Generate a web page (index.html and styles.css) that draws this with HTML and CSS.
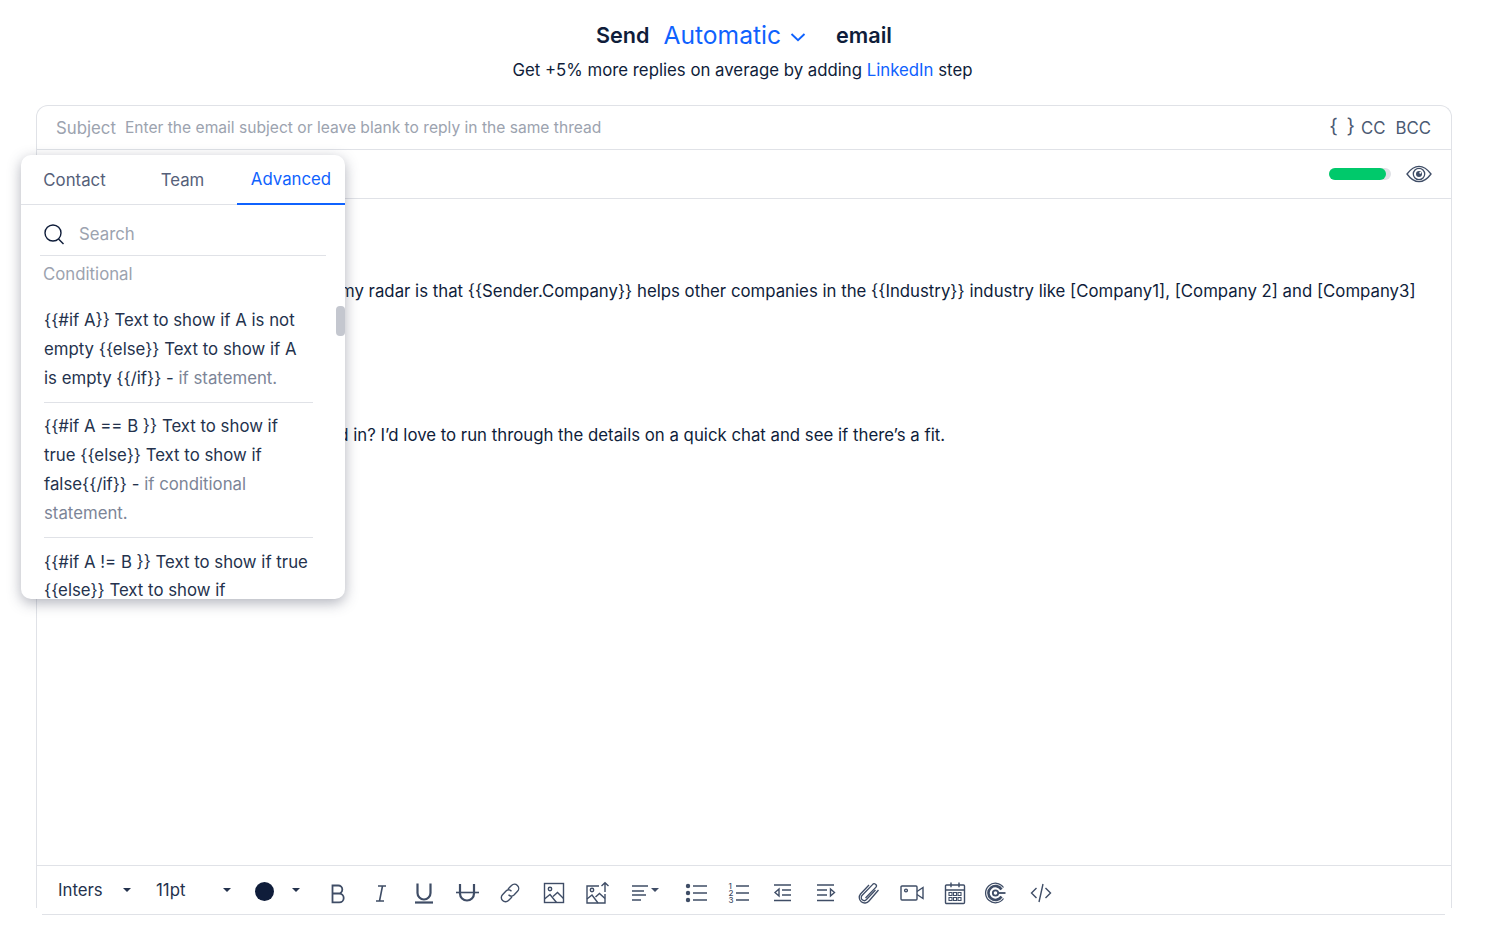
FILE: index.html
```html
<!DOCTYPE html>
<html lang="en">
<head>
<meta charset="utf-8">
<title>Send email</title>
<link rel="stylesheet" href="styles.css">
</head>
<body>
<header class="head">
  <div class="head-title">
    <span>Send</span>
    <span class="mode">Automatic</span>
    <svg class="chev" viewBox="0 0 16 10" width="16" height="10"><path d="M1.500 2 8 8.200 14.500 2" fill="none" stroke="#0f62fe" stroke-width="1.900"/></svg>
    <span class="email">email</span>
  </div>
  <div class="head-sub">Get +5% more replies on average by adding <span class="blue">LinkedIn</span> step</div>
</header>

<main class="editor">
  <div class="subject">
    <span class="subject-label">Subject</span>
    <span class="subject-ph">Enter the email subject or leave blank to reply in the same thread</span>
    <span class="subject-right"><span class="braces">{ }</span><span>CC</span><span>BCC</span></span>
  </div>
  <div class="status">
    <div class="meter"><div class="meter-fill"></div></div>
    <svg width="26" height="18" viewBox="0 0 26 18" fill="none" stroke="#3f4d66" stroke-width="1.300"><path d="M1 9C5 3.600 8.800 1.300 13 1.300S21 3.600 25 9c-4 5.400-7.800 7.700-12 7.700S5 14.400 1 9Z"/><circle cx="13" cy="9" r="5.700"/><circle cx="13" cy="9" r="3" fill="#3f4d66" stroke="none"/><circle cx="14.300" cy="7.800" r="1" fill="#fff" stroke="none"/></svg>
  </div>
  <div class="body">
    <p class="line">This reason why you popped up on my radar is that {{Sender.Company}} helps other companies in the {{Industry}} industry like [Company1], [Company 2] and [Company3]</p>
    <p class="line">Is that something you’d be interested in? I’d love to run through the details on a quick chat and see if there’s a fit.</p>
  </div>
  <div class="toolbar">
    <div class="toolbar-inner">
      <span class="select sel-font">Inters</span><span class="caret c1"></span>
      <span class="select sel-size">11pt</span><span class="caret c2"></span>
      <span class="dot"></span><span class="caret c3"></span>
      <div class="icons">
        <svg class="ic" viewBox="0 0 22 22"><path d="M5.500 3.500h5.800a4 4 0 0 1 0 8H5.500Zm0 8h6.800a4.300 4.300 0 0 1 0 8.800H5.500Z" stroke-width="1.800"/></svg>
        <svg class="ic" viewBox="0 0 22 22"><path d="M8 4h8M6 19h8M12.500 4l-3 15" stroke-width="1.600"/></svg>
        <svg class="ic" viewBox="0 0 22 22"><path d="M4.500 1.500V11a6.500 6.500 0 0 0 13 0V1.500" stroke-width="2.200"/><path d="M2 20.500h18" stroke-width="2.200"/></svg>
        <svg class="ic" viewBox="0 0 22 22"><path d="M4 2v9.500a7 7 0 0 0 14 0V2" stroke-width="2.200"/><path d="M0 10.500h23" stroke-width="1.600"/></svg>
        <svg class="ic" viewBox="0 0 22 22"><path d="M9 7l3.500-3.500a4 4 0 0 1 6 5.800L15 13a4 4 0 0 1-5.500-.2M13 15l-3.500 3.500a4 4 0 0 1-6-5.800L7 9a4 4 0 0 1 5.500.2" stroke-width="1.400"/></svg>
        <svg class="ic shift-r" viewBox="0 0 22 22"><rect x="1.500" y="1.500" width="19" height="19"/><circle cx="7" cy="7" r="1.700"/><path d="M1.500 17l5.500-4.500 6.500 8M10 14.500l4.500-4 6 6"/></svg>
        <svg class="ic" viewBox="0 0 22 22"><path d="M13 4H1v17h18v-9"/><circle cx="6" cy="8" r="1.700"/><path d="M1 17l5-4 6 8M9.500 15l4-3.500 5.500 5M19 10V1M15.500 4 19 .8 22.500 4"/></svg>
        <svg class="ic ic-wide" viewBox="0 0 35 22"><path d="M3 4h16M3 9h12M3 13h14M3 18h9"/><path d="M22 6h8l-4 4Z" fill="#3f4d66" stroke="none"/></svg>
        <svg class="ic" viewBox="0 0 22 22"><circle cx="3" cy="4" r="2.200" class="fill"/><circle cx="3" cy="11" r="2.200" class="fill"/><circle cx="3" cy="18" r="2.200" class="fill"/><path d="M8 4h14M8 11h14M8 18h14"/></svg>
        <svg class="ic" viewBox="0 0 22 22"><path d="M8 4h13M8 11h13M8 18h13"/><text x="0.500" y="7" class="num">1</text><text x="0.500" y="14" class="num">2</text><text x="0.500" y="21" class="num">3</text></svg>
        <svg class="ic" viewBox="0 0 22 22"><path d="M3 3h17M11 8h9M11 13h9M3 18.500h17"/><path d="M8 7v7l-4-3.500Z"/></svg>
        <svg class="ic shift-r" viewBox="0 0 22 22"><path d="M2 3h17M2 8h10M2 13h10M2 18.500h17"/><path d="M15.500 7v7l4-3.500Z"/></svg>
        <svg class="ic shift-l" viewBox="0 0 22 22"><path d="M17.500 8 8.500 17.500a3 3 0 0 1-4.500-4L14.500 2.700a2 2 0 0 1 3.500 2.500L7.500 16M20.500 8l-9.500 11a5.500 5.500 0 0 1-8.500-7L11 3" stroke-width="1.300"/></svg>
        <svg class="ic ic-video" viewBox="0 0 24 22"><rect x="1" y="4" width="16" height="14" rx="1"/><circle cx="6" cy="8.500" r="1.400"/><path d="M17 9.500 23 5.500v11l-6-4"/></svg>
        <svg class="ic" viewBox="0 0 22 22"><rect x="1.500" y="3" width="19" height="18.500" rx="1"/><path d="M1.500 8h19M7 .5v4.800M15 .5v4.800"/><path d="M5 10.500h3v3H5zM9.500 10.500h3v3h-3zM14 10.500h3v3h-3zM5 15.500h3v3H5zM9.500 15.500h3v3h-3zM14 15.500h3v3h-3z" stroke-width="1.100"/></svg>
        <svg class="ic ic-c" viewBox="0 0 22 22"><path d="M19.500 5.500A9.800 9.800 0 1 0 19.500 16.500" stroke-width="1.300"/><path d="M17.500 7.500A7 7 0 1 0 17.500 14.500" stroke-width="2.600"/><circle cx="11.500" cy="11" r="2.700" stroke-width="1.800"/><path d="M14 11h7.500" stroke-width="1.800"/></svg>
        <svg class="ic ic-code" viewBox="0 0 22 22"><path d="M6.500 6 1.500 11l5 5M15.500 6l5 5-5 5M13 2 9 20"/></svg>
      </div>
    </div>
  </div>

  <aside class="popup">
    <nav class="tabs">
      <span class="tab">Contact</span>
      <span class="tab">Team</span>
      <span class="tab tab-active">Advanced</span>
    </nav>
    <div class="search">
      <svg width="22" height="22" viewBox="0 0 22 22" fill="none" stroke="#0f1d3a" stroke-width="1.400"><circle cx="10" cy="10" r="8"/><path d="m15.500 16 5 5"/></svg>
      <span>Search</span>
    </div>
    <div class="section">Conditional</div>
    <div class="list">
      <div class="item">{{#if A}} Text to show if A is not empty {{else}} Text to show if A is empty {{/if}} - <span class="muted">if statement.</span></div>
      <div class="item">{{#if A == B }} Text to show if true {{else}} Text to show if false{{/if}} - <span class="muted">if conditional statement.</span></div>
      <div class="item">{{#if A != B }} Text to show if true {{else}} Text to show if</div>
    </div>
    <div class="thumb"></div>
  </aside>
</main>
</body>
</html>
```
FILE: styles.css
```css
* { box-sizing: border-box; }
html, body { margin: 0; height: 100%; }
body {
  background: #fff;
  color: #0f1d3a;
  font-family: Inter, "Liberation Sans", sans-serif;
  font-size: 16.8px;
  overflow: hidden;
}
.head { height: 105px; padding-top: 19px; display: flex; flex-direction: column; align-items: center; }
.head-title { display: flex; align-items: center; height: 32px; font-size: 21.6px; font-weight: 600; margin-left: 3px; }
.mode { color: #0f62fe; font-size: 24.6px; font-weight: 400; margin-left: 14px; }
.chev { margin: 4px 0 0 9px; }
.email { margin-left: 30px; }
.head-sub { margin-top: 4px; line-height: 30px; }
.blue { color: #0f62fe; }

.editor {
  position: relative;
  margin-left: 36px;
  width: 1416px;
  height: 803px;
  border: 1px solid #e0e2e7;
  border-bottom: 0;
  border-radius: 12px 12px 0 0;
  display: flex;
  flex-direction: column;
}
.subject {
  height: 44px;
  flex: none;
  border-bottom: 1px solid #e0e2e7;
  display: flex;
  align-items: center;
  padding: 0 20px 0 19px;
  color: #9ca3af;
}
.subject-label { margin-right: 9px; }
.subject-ph { font-size: 15.6px; }
.subject-right { margin-left: auto; display: flex; gap: 10px; color: #4b5a73; }
.braces { font-size: 20px; line-height: 24px; margin-top: -4px; margin-right: -4px; word-spacing: 3px; }
.status {
  height: 49px;
  flex: none;
  border-bottom: 1px solid #e0e2e7;
  display: flex;
  align-items: center;
  justify-content: flex-end;
  gap: 15px;
  padding-right: 19px;
}
.meter { width: 62px; height: 12px; border-radius: 6px; background: #dfe1e5; }
.meter-fill { width: 57px; height: 12px; border-radius: 6px; background: #00c96b; }
.body { flex: 1; padding-top: 80px; padding-left: 19px; }
.line { margin: 0 0 120px; line-height: 24px; white-space: nowrap; }
.toolbar { flex: none; height: 49px; margin-bottom: -6px; border-top: 1px solid #e0e2e7; }
.toolbar-inner {
  height: 49px;
  margin: 0 6px 0 5px;
  border-bottom: 1px solid #e0e2e7;
  display: flex;
  align-items: center;
  padding-left: 16px;
}
.select { color: #24324d; }
.sel-font { width: 65px; }
.sel-size { width: 67px; }
.caret { width: 0; height: 0; border: 4px solid transparent; border-top-color: #24324d; border-bottom: 0; }
.c1 { margin-right: 25px; }
.c2 { margin-right: 24px; }
.dot { width: 19px; height: 19px; border-radius: 50%; background: #0f1d3a; margin: 3px 18px 0 0; }
.icons { display: flex; align-items: center; gap: 21px; margin: 6px 0 0 27px; }
.ic { width: 22px; height: 22px; fill: none; stroke: #3f4d66; stroke-width: 1.400; flex: none; overflow: visible; }
.ic-wide { width: 35px; }
.ic-video { width: 24px; margin-right: -1px; }
.shift-r { margin-left: 1px; }
.shift-l { margin-right: -1px; }
.ic-c { margin-left: -3px; }
.ic-code { margin-left: 3px; }
.ic .fill { fill: #3f4d66; stroke: none; }
.ic .num { font-size: 8px; fill: #3f4d66; stroke: none; font-weight: 500; }

.popup {
  position: absolute;
  left: -16px;
  top: 49px;
  width: 324px;
  height: 444px;
  background: #fff;
  border-radius: 10px;
  box-shadow: 0 4px 14px rgba(60, 66, 87, .4);
  overflow: hidden;
}
.tabs { height: 50px; display: flex; border-bottom: 1px solid #e0e2e7; color: #556079; }
.tab { display: flex; align-items: center; justify-content: center; height: 50px; }
.tab:nth-child(1) { width: 107px; }
.tab:nth-child(2) { width: 109px; }
.tab-active { width: 108px; color: #0f62fe; border-bottom: 2px solid #0f62fe; }
.search {
  margin: 0 19px;
  height: 51px;
  display: flex;
  align-items: center;
  gap: 14px;
  padding: 8px 0 0 3px;
  border-bottom: 1px solid #e0e2e7;
  color: #9ca3af;
}
.section { padding-left: 22px; color: #9ca3af; line-height: 37px; }
.list { padding: 3.5px 32px 0 23px; }
.item { padding: 9.5px 0; line-height: 28.8px; color: #24324d; border-bottom: 1px solid #e0e2e7; }
.muted { color: #7c8597; }
.thumb { position: absolute; right: 0; top: 151px; width: 9px; height: 30px; border-radius: 4px; background: #c4c7cf; }
```
